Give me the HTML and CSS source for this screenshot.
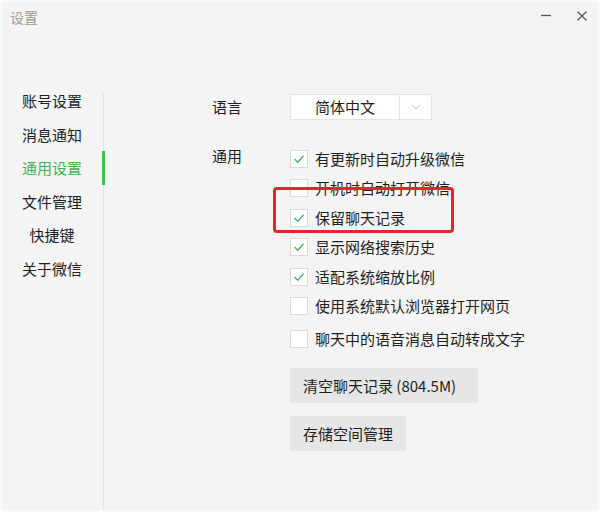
FILE: index.html
```html
<!DOCTYPE html>
<html lang="zh-CN">
<head>
<meta charset="utf-8">
<title>设置</title>
<link rel="stylesheet" href="styles.css">
</head>
<body>
<div class="window">
  <header class="titlebar">
    <span class="title">设置</span>
    <div class="controls">
      <svg class="ctl" width="10" height="10" viewBox="0 0 10 10"><line x1="0" y1="4.5" x2="10" y2="4.5" stroke="#555" stroke-width="1.3"/></svg>
      <svg class="ctl" width="10" height="10" viewBox="0 0 10 10"><path d="M0.5 0.5 L9.5 9.5 M9.5 0.5 L0.5 9.5" stroke="#555" stroke-width="1.2" fill="none"/></svg>
    </div>
  </header>
  <div class="body">
    <nav class="sidebar">
      <ul class="nav">
        <li class="nav-item">账号设置</li>
        <li class="nav-item">消息通知</li>
        <li class="nav-item active">通用设置</li>
        <li class="nav-item">文件管理</li>
        <li class="nav-item">快捷键</li>
        <li class="nav-item">关于微信</li>
      </ul>
    </nav>
    <main class="content">
      <div class="row lang-row">
        <span class="label">语言</span>
        <div class="select">
          <span class="select-value">简体中文</span>
          <span class="select-arrow">
            <svg width="10" height="6" viewBox="0 0 10 6"><path d="M0.5 0.5 L5 5 L9.5 0.5" stroke="#c4c4c4" stroke-width="1" fill="none"/></svg>
          </span>
        </div>
      </div>
      <div class="row general-row">
        <span class="label label-general">通用</span>
        <div class="options">
          <div class="option">
            <span class="checkbox checked"><svg width="18" height="18" viewBox="0 0 18 18"><path d="M4.5 9 L7.8 12.2 L13.5 5.8" stroke="#46b461" stroke-width="1.3" fill="none"/></svg></span>
            <span class="option-text">有更新时自动升级微信</span>
          </div>
          <div class="option">
            <span class="checkbox"></span>
            <span class="option-text">开机时自动打开微信</span>
          </div>
          <div class="option highlighted">
            <span class="checkbox checked"><svg width="18" height="18" viewBox="0 0 18 18"><path d="M4.5 9 L7.8 12.2 L13.5 5.8" stroke="#46b461" stroke-width="1.3" fill="none"/></svg></span>
            <span class="option-text">保留聊天记录</span>
            <span class="highlight-box"></span>
          </div>
          <div class="option">
            <span class="checkbox checked"><svg width="18" height="18" viewBox="0 0 18 18"><path d="M4.5 9 L7.8 12.2 L13.5 5.8" stroke="#46b461" stroke-width="1.3" fill="none"/></svg></span>
            <span class="option-text">显示网络搜索历史</span>
          </div>
          <div class="option">
            <span class="checkbox checked"><svg width="18" height="18" viewBox="0 0 18 18"><path d="M4.5 9 L7.8 12.2 L13.5 5.8" stroke="#46b461" stroke-width="1.3" fill="none"/></svg></span>
            <span class="option-text">适配系统缩放比例</span>
          </div>
          <div class="option">
            <span class="checkbox"></span>
            <span class="option-text">使用系统默认浏览器打开网页</span>
          </div>
          <div class="option option-last">
            <span class="checkbox"></span>
            <span class="option-text">聊天中的语音消息自动转成文字</span>
          </div>
          <button class="btn btn-first">清空聊天记录 (804.5M)</button>
          <button class="btn">存储空间管理</button>
        </div>
      </div>
    </main>
  </div>
</div>
</body>
</html>
```
FILE: styles.css
```css
* { box-sizing: border-box; }
html, body { margin: 0; padding: 0; }
body {
  width: 600px;
  height: 512px;
  overflow: hidden;
  font-family: "Noto Sans CJK SC", "Noto Sans", sans-serif;
  color: #1e1e1e;
  background: #ffffff;
}
.window {
  width: 600px;
  height: 512px;
  border: 2px solid #fbfbfb;
  background: #f4f4f4;
  display: flex;
  flex-direction: column;
}
.titlebar {
  height: 82px;
  flex: none;
  display: flex;
  justify-content: space-between;
  align-items: flex-start;
  padding: 7px 11px 0 8px;
}
.title {
  font-size: 14px;
  line-height: 16px;
  color: #9a9a9a;
}
.controls {
  display: flex;
  gap: 26px;
}
.ctl { display: block; margin-top: 2px; }
.body {
  flex: 1;
  display: flex;
  min-height: 0;
}
.sidebar {
  width: 102px;
  flex: none;
  margin-top: 9px;
  border-right: 1px solid #e3e3e3;
}
.nav {
  list-style: none;
  margin: -9px 0 0 0;
  padding: 0;
}
.nav-item {
  height: 33.5px;
  line-height: 34px;
  font-size: 15px;
  text-align: center;
  color: #1e1e1e;
  margin-right: -2px;
  border-right: 3px solid transparent;
}
.nav-item.active {
  color: #3fb34f;
  border-right-color: #3fbf4c;
}
.content {
  flex: 1;
  padding: 10px 0 0 108px;
}
.row { display: flex; }
.label {
  width: 78px;
  flex: none;
  font-size: 15px;
  line-height: 26px;
  color: #1e1e1e;
}
.label-general {
  line-height: 18px;
  margin-top: -3px;
}
.select {
  display: flex;
  width: 142px;
  height: 26px;
  border: 1px solid #e3e3e3;
  background: #fff;
}
.select-value {
  width: 109px;
  text-align: center;
  font-size: 15px;
  line-height: 24px;
  color: #1e1e1e;
  border-right: 1px solid #e3e3e3;
}
.select-arrow {
  flex: 1;
  display: flex;
  align-items: center;
  justify-content: center;
}
.general-row { margin-top: 30px; }
.options {
  display: flex;
  flex-direction: column;
  align-items: flex-start;
  gap: 11.4px;
}
.option {
  display: flex;
  align-items: center;
  height: 18px;
  position: relative;
}
.option-last { margin-top: 4px; }
.checkbox {
  width: 18px;
  height: 18px;
  border: 1px solid #dadada;
  background: #fff;
  flex: none;
  display: flex;
  align-items: center;
  justify-content: center;
  overflow: hidden;
}
.checkbox svg { display: block; flex: none; }
.option-text {
  margin-left: 7px;
  font-size: 15px;
  line-height: 18px;
  color: #1e1e1e;
  white-space: nowrap;
}
.highlight-box {
  position: absolute;
  left: -17px;
  top: -22px;
  width: 181px;
  height: 46px;
  border: 3px solid #e4262a;
  border-radius: 4px;
  pointer-events: none;
}
.btn {
  font-family: inherit;
  font-size: 15px;
  line-height: 35px;
  height: 35px;
  padding: 0 13px;
  border: none;
  border-radius: 3px;
  background: #e6e6e6;
  color: #1e1e1e;
  margin-top: 1.6px;
}
.btn-first {
  margin-top: 8.6px;
  min-width: 188px;
  text-align: left;
}
```
